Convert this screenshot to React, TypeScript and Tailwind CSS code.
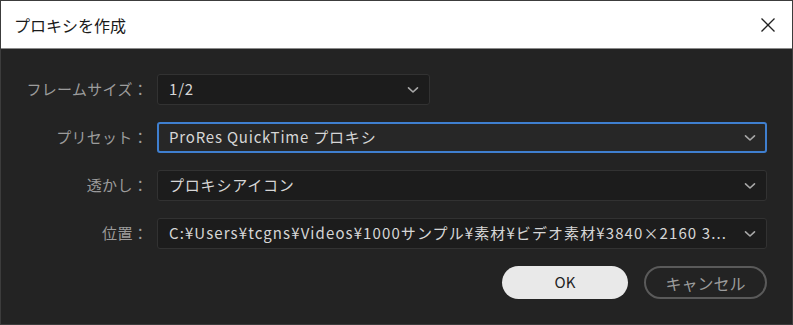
import { ReactNode } from "react";

const jp = { fontFamily: '"Noto Sans CJK JP", "Noto Sans", sans-serif' };

const Chevron = () => (
  <svg width="12" height="8" viewBox="0 0 12 8" fill="none" className="shrink-0">
    <path d="M1.5 1.8 L6 6 L10.5 1.8" stroke="#a8a8a8" strokeWidth="1.6" strokeLinecap="round" strokeLinejoin="round" />
  </svg>
);

type RowProps = { label: string; children: ReactNode; active?: boolean; narrow?: boolean; wide?: boolean };

const Row = ({ label, children, active, narrow, wide }: RowProps) => (
  <>
    <div className="flex items-center justify-end text-[15px] text-[#9c9c9c] tracking-[0.3px]">{label}：</div>
    <div className={narrow ? "w-[273px]" : "w-full"}>
      <div
        className={
          active
            ? "flex h-[31px] items-center justify-between rounded-[3px] border-2 border-[#3f7fcf] bg-[#272727] pl-[10px] pr-[9px]"
            : "flex h-[31px] items-center justify-between rounded-[3px] border border-[#323232] bg-[#1c1c1c] pl-[11px] pr-[10px]"
        }
      >
        <span className={wide ? "truncate text-[15px] tracking-[1.1px] text-[#d6d6d6]" : "truncate text-[15px] tracking-[0.8px] text-[#d6d6d6]"}>
          {children}
        </span>
        <Chevron />
      </div>
    </div>
  </>
);

export default function App() {
  return (
    <div style={jp} className="h-[325px] w-[793px] overflow-hidden border border-[#3c3c3c] bg-[#232323]">
      <div className="flex h-[48px] items-center justify-between border-b border-[#8a8a8a] bg-white pl-[13px] pr-[16px]">
        <span className="text-[16px] text-[#1a1a1a]">プロキシを作成</span>
        <svg width="16" height="16" viewBox="0 0 16 16" fill="none">
          <path d="M1.5 1.5 L14.5 14.5 M14.5 1.5 L1.5 14.5" stroke="#222" strokeWidth="1.3" />
        </svg>
      </div>

      <div className="pr-[25px] pt-[25px]">
        <div className="grid grid-cols-[147px_1fr] gap-x-[9px] gap-y-[17px]">
          <Row label="フレームサイズ" narrow>1/2</Row>
          <Row label="プリセット" active>ProRes QuickTime プロキシ</Row>
          <Row label="透かし">プロキシアイコン</Row>
          <Row label="位置" wide>C:¥Users¥tcgns¥Videos¥1000サンプル¥素材¥ビデオ素材¥3840×2160 3...</Row>
        </div>

        <div className="mt-[17px] flex justify-end gap-[16px]">
          <button className="h-[33px] w-[126px] rounded-full bg-[#e9e9e9] text-[15px] text-[#222]">OK</button>
          <button className="h-[33px] w-[123px] rounded-full border-2 border-[#5a5a5a] text-[16px] text-[#9c9c9c]">キャンセル</button>
        </div>
      </div>
    </div>
  );
}
